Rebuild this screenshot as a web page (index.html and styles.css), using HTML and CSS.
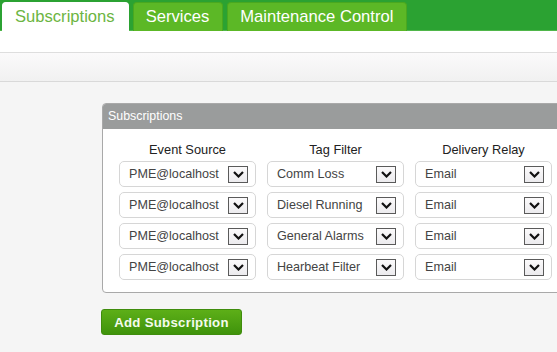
FILE: index.html
```html
<!DOCTYPE html>
<html>

<head>
  <link rel="stylesheet" href="styles.css">
</head>

<body>
  <div class="tabbar">
    <a class="tab active">Subscriptions</a>
    <a class="tab">Services</a>
    <a class="tab">Maintenance Control</a>
  </div>

  <div class="spacer"></div>
  <div class="toolbar"></div>

  <div class="content">
    <div class="panel">
      <div class="panel-head">Subscriptions</div>
      <div class="panel-body">
        <div class="col-head">Event Source</div>
        <div class="col-head">Tag Filter</div>
        <div class="col-head">Delivery Relay</div>

        <div class="dropdown"><span>PME@localhost</span><i class="arrow"></i></div>
        <div class="dropdown"><span>Comm Loss</span><i class="arrow"></i></div>
        <div class="dropdown"><span>Email</span><i class="arrow"></i></div>

        <div class="dropdown"><span>PME@localhost</span><i class="arrow"></i></div>
        <div class="dropdown"><span>Diesel Running</span><i class="arrow"></i></div>
        <div class="dropdown"><span>Email</span><i class="arrow"></i></div>

        <div class="dropdown"><span>PME@localhost</span><i class="arrow"></i></div>
        <div class="dropdown"><span>General Alarms</span><i class="arrow"></i></div>
        <div class="dropdown"><span>Email</span><i class="arrow"></i></div>

        <div class="dropdown"><span>PME@localhost</span><i class="arrow"></i></div>
        <div class="dropdown"><span>Hearbeat Filter</span><i class="arrow"></i></div>
        <div class="dropdown"><span>Email</span><i class="arrow"></i></div>
      </div>
    </div>

    <button class="add-btn">Add Subscription</button>
  </div>

  <script>
    // draw the chevron into every dropdown button
    const chevron = '<svg width="11" height="7" viewBox="0 0 11 7"><path d="M1 1 L5.5 5.5 L10 1" fill="none" stroke="#111" stroke-width="2.2"/></svg>';
    document.querySelectorAll(".arrow").forEach((el) => {
      el.innerHTML = chevron;
    });
  </script>
</body>

</html>
```

FILE: styles.css
```css
* {
  margin: 0;
  padding: 0;
  box-sizing: border-box;
}

html, body {
  overflow: hidden;
}

body {
  width: 557px;
  height: 352px;
  font-family: "Liberation Sans", Arial, sans-serif;
  background-color: #f5f5f5;
}

.tabbar {
  display: flex;
  gap: 4px;
  height: 31px;
  padding: 2px 0 0 2px;
  background-color: #2ba232;
  border-bottom: 1px solid #4fb64a;
}

.tab {
  display: flex;
  align-items: center;
  height: 29px;
  padding: 0 13px 0 12px;
  font-size: 16.6px;
  color: #ffffff;
  background-color: #5cb826;
  border: 1px solid #4aa81f;
  border-bottom: none;
  border-radius: 4px 4px 0 0;
}

.tab.active {
  color: #6cb542;
  background-color: #ffffff;
  border-color: #ffffff;
}

.spacer {
  height: 21px;
  background-color: #ffffff;
}

.toolbar {
  height: 30px;
  border-top: 1px solid #dedede;
  border-bottom: 1px solid #d9d9d9;
  background: linear-gradient(#fbfafb, #f1f1f1);
}

.content {
  padding: 21px 0 0 102px;
  height: 271px;
  border-bottom: 1px solid #cfcfcf;
}

.panel {
  width: 466px;
  background-color: #ffffff;
  border: 1px solid #a9a9a9;
  border-radius: 4px;
  overflow: hidden;
}

.panel-head {
  height: 25px;
  padding: 5px 0 0 5px;
  font-size: 12.4px;
  color: #ffffff;
  background-color: #9a9c9c;
}

.panel-body {
  display: grid;
  grid-template-columns: repeat(3, 137px);
  column-gap: 11px;
  row-gap: 5px;
  padding: 13px 0 12px 16px;
}

.col-head {
  height: 16px;
  margin-bottom: -2px;
  font-size: 12.8px;
  line-height: 16px;
  text-align: center;
  color: #222222;
}

.dropdown {
  display: flex;
  align-items: center;
  justify-content: space-between;
  height: 26px;
  padding: 0 7px 0 9px;
  font-size: 12.6px;
  color: #444444;
  border: 1px solid #d6d6d6;
  border-radius: 5px;
  background-color: #ffffff;
}

.arrow {
  display: flex;
  align-items: center;
  justify-content: center;
  width: 20px;
  height: 17px;
  border: 1px solid #5a5a5a;
  background: linear-gradient(#fbfafb, #ecebee);
}

.add-btn {
  margin-top: 16px;
  width: 141px;
  height: 26px;
  font-family: "Liberation Sans", Arial, sans-serif;
  font-size: 13.2px;
  font-weight: bold;
  letter-spacing: 0.3px;
  color: #f4fbee;
  border: 1px solid #3f8c0d;
  border-radius: 3px;
  background: linear-gradient(#5daf18, #3f930b);
  margin-left: -1px;
}
```
